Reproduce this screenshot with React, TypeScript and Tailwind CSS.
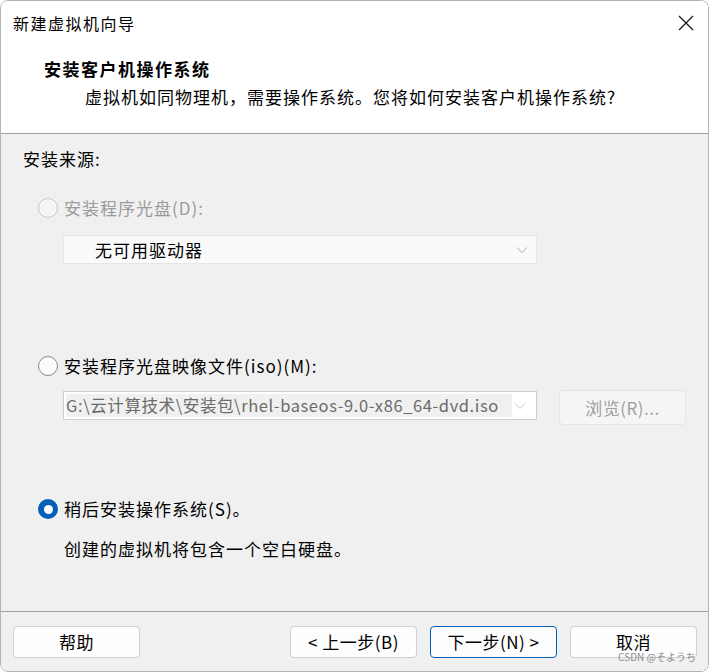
import React from "react";

const font = { fontFamily: '"Noto Sans CJK SC", "Noto Sans", sans-serif' };

function Radio({ state }: { state: "off" | "disabled" | "on" }) {
  if (state === "on") {
    return (
      <span className="flex h-[20px] w-[20px] items-center justify-center rounded-full bg-[#005fb8]">
        <span className="h-[9px] w-[9px] rounded-full bg-white" />
      </span>
    );
  }
  return (
    <span
      className={`h-[20px] w-[20px] rounded-full border ${
        state === "disabled" ? "border-[#c8c8c8] bg-[#f6f6f6]" : "border-[#8a8a8a] bg-[#fbfbfb]"
      }`}
    />
  );
}

function Chevron({ color }: { color: string }) {
  return (
    <svg width="12" height="8" viewBox="0 0 12 8" fill="none" stroke={color} strokeWidth="1">
      <polyline points="1,1.5 6,6.5 11,1.5" />
    </svg>
  );
}

function Button({ label, primary }: { label: string; primary?: boolean }) {
  return (
    <button
      className={`flex h-[32px] w-[127px] items-center justify-center rounded-[4px] bg-[#fdfdfd] text-[17px] tracking-[0.5px] text-black ${
        primary ? "border border-[#005fb8]" : "border border-[#d0d0d0]"
      }`}
    >
      {label}
    </button>
  );
}

export default function App() {
  return (
    <div
      className="relative flex h-[672px] w-[709px] flex-col overflow-hidden rounded-lg border border-[#b4b4b4] text-black"
      style={font}
    >
      {/* Title bar */}
      <div className="flex h-[44px] items-center justify-between bg-white pl-[12px] pr-[14px]">
        <span className="text-[16px] tracking-[1.5px]">新建虚拟机向导</span>
        <svg width="16" height="16" viewBox="0 0 16 16" stroke="#1a1a1a" strokeWidth="1.3">
          <line x1="1" y1="1" x2="15" y2="15" />
          <line x1="15" y1="1" x2="1" y2="15" />
        </svg>
      </div>

      {/* Header */}
      <div className="flex h-[89px] flex-col bg-white border-b border-[#a0a0a0]">
        <div className="mt-[12px] pl-[43px] text-[17px] font-bold leading-6 tracking-[1.5px]">安装客户机操作系统</div>
        <div className="mt-[4px] pl-[84px] text-[17px] leading-6 tracking-[1px]">
          虚拟机如同物理机，需要操作系统。您将如何安装客户机操作系统?
        </div>
      </div>

      {/* Body */}
      <div className="flex flex-1 flex-col bg-[#f0f0f0] pl-[22px] text-[17px]">
        <div className="mt-[13px] h-6 leading-6 tracking-[1px]">安装来源:</div>

        <div className="ml-[15px] mt-[25px] flex h-6 items-center gap-[6px]">
          <Radio state="disabled" />
          <span className="leading-6 tracking-[1px] text-[#9a9a9a]">安装程序光盘(D):</span>
        </div>

        <div className="ml-[40px] mt-[15px] flex h-[29px] w-[474px] items-center justify-between border border-[#e6e6e6] bg-[#fafafa] pl-[31px] pr-[8px]">
          <span className="tracking-[1px]">无可用驱动器</span>
          <Chevron color="#a8a8a8" />
        </div>

        <div className="ml-[15px] mt-[90px] flex h-6 items-center gap-[6px]">
          <Radio state="off" />
          <span className="leading-6 tracking-[1px]">安装程序光盘映像文件(iso)(M):</span>
        </div>

        <div className="ml-[40px] mt-[12px] flex h-[35px] items-start gap-[22px]">
          <div className="mt-[1px] flex h-[29px] w-[474px] items-center justify-between border border-[#cccccc] bg-white pl-[2px] pr-[10px]">
            <span className="flex h-[23px] w-[446px] items-center bg-[#f0f0f0] text-[16.5px] tracking-[0.6px] text-[#6b6b6b]">
              G:\云计算技术\安装包\rhel-baseos-9.0-x86_64-dvd.iso
            </span>
            <Chevron color="#c4c4c4" />
          </div>
          <div className="flex h-[35px] w-[127px] items-center justify-center rounded-[4px] border border-[#e5e5e5] bg-[#f5f5f5] tracking-[0.5px] text-[#a0a0a0]">
            浏览(R)...
          </div>
        </div>

        <div className="ml-[15px] mt-[72px] flex h-6 items-center gap-[6px]">
          <Radio state="on" />
          <span className="leading-6 tracking-[1px]">稍后安装操作系统(S)。</span>
        </div>

        <div className="ml-[41px] mt-[16px] h-6 leading-6 tracking-[1px]">创建的虚拟机将包含一个空白硬盘。</div>
      </div>

      {/* Footer */}
      <div className="flex h-[60px] items-start border-t border-[#a0a0a0] bg-[#f0f0f0] pl-[12px] pt-[14px]">
        <Button label="帮助" />
        <div className="ml-[150px] flex gap-[13px]">
          <Button label="< 上一步(B)" />
          <Button label="下一步(N) >" primary />
          <Button label="取消" />
        </div>
      </div>

      <span className="absolute bottom-[7px] right-[12px] text-[10px] text-[#8c8c8c]">CSDN @そようち</span>
    </div>
  );
}
